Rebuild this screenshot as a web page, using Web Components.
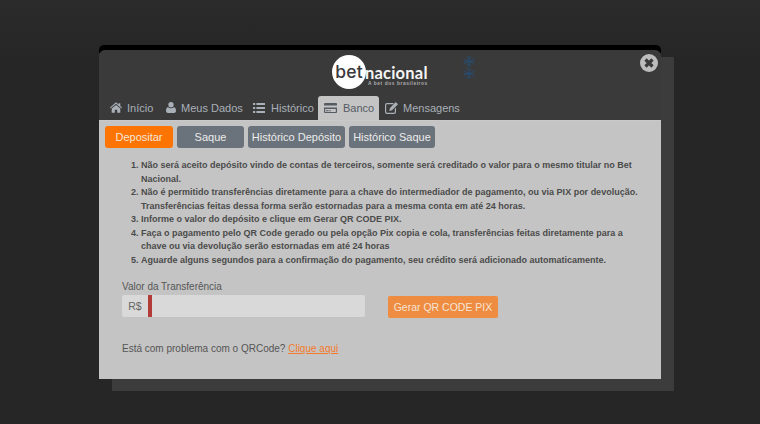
<!DOCTYPE html>
<html lang="pt"><head><meta charset="utf-8"><style>
html,body{margin:0;height:100%;background:#272727;overflow:hidden}
body{font-family:"Liberation Sans",Arial,sans-serif}
</style></head><body>
<bn-stage>
  <bn-modal>
    <bn-logo slot="logo"></bn-logo>
    <bn-tab slot="tabs" icon="home" style="--w:56px;--p:7px;--g:5px">Início</bn-tab>
    <bn-tab slot="tabs" icon="user" style="--w:88px;--p:7px;--g:5px">Meus Dados</bn-tab>
    <bn-tab slot="tabs" icon="list" style="--w:71px;--p:6px;--g:6px">Histórico</bn-tab>
    <bn-tab slot="tabs" icon="card" active style="--w:61px;--p:6px;--g:6px">Banco</bn-tab>
    <bn-tab slot="tabs" icon="edit" style="--w:87px;--p:6px;--g:5px">Mensagens</bn-tab>
    <bn-btn slot="subtabs" kind="primary" style="--w:68px">Depositar</bn-btn>
    <bn-btn slot="subtabs" style="--w:67px">Saque</bn-btn>
    <bn-btn slot="subtabs" style="--w:97px">Histórico Depósito</bn-btn>
    <bn-btn slot="subtabs" style="--w:86px">Histórico Saque</bn-btn>
    <bn-deposit></bn-deposit>
  </bn-modal>
</bn-stage>
<script>
function def(name, html, init){
  customElements.define(name, class extends HTMLElement{
    constructor(){super();this.attachShadow({mode:'open'}).innerHTML=html;}
    connectedCallback(){init&&init(this);}
  });
}
const ICONS={
 home:'<svg viewBox="0 0 14 12" width="12" height="11"><path fill="currentColor" d="M7 0 10 2.600V1h2v3.300L14 6l-.8.9L7 1.700.8 6.900 0 6zM2 7.300 7 3l5 4.300V12H8.400V8.600H5.600V12H2z"/></svg>',
 user:'<svg viewBox="0 0 12 13" width="10" height="11"><circle cx="6" cy="3.200" r="3.200" fill="currentColor"/><path fill="currentColor" d="M2.500 5.800C3.400 7 4.600 7.500 6 7.500s2.600-.5 3.500-1.700C11 6.300 12 8 12 10.500c0 1.600-.9 2.500-2.300 2.500H2.300C.9 13 0 12.100 0 10.500 0 8 1 6.300 2.500 5.800z"/></svg>',
 list:'<svg viewBox="0 0 12 10" width="12" height="10"><path fill="currentColor" d="M0 0h2.200v2H0zM3.400 0H12v2H3.400zM0 4h2.200v2H0zM3.400 4H12v2H3.400zM0 8h2.200v2H0zM3.400 8H12v2H3.400z"/></svg>',
 card:'<svg viewBox="0 0 13 10" width="13" height="10"><path fill="currentColor" fill-rule="evenodd" d="M1 0h11a1 1 0 0 1 1 1v8a1 1 0 0 1-1 1H1a1 1 0 0 1-1-1V1a1 1 0 0 1 1-1zM0 2.500v2h13v-2zM1.200 6v2.900h10.600V6z"/><path fill="currentColor" d="M2 7.200h2.600v1H2zM5.300 7.200h1.500v1H5.300z"/></svg>',
 edit:'<svg viewBox="0 0 13 12" width="13" height="12"><path fill="currentColor" fill-rule="evenodd" d="M2 1h7L7.800 2.200H2a.8.8 0 0 0-.8.800v7c0 .4.400.8.800.8h7c.4 0 .8-.4.8-.8V6.800L11 5.600V10a2 2 0 0 1-2 2H2a2 2 0 0 1-2-2V3a2 2 0 0 1 2-2z"/><path fill="currentColor" d="M10.800 0 13 2.200 7 8.300 4.200 9 5 6.100z"/></svg>'
};
def('bn-stage',`<style>
:host{display:block;position:relative;height:424px;box-sizing:border-box;padding:45px 0 0 99px;background:linear-gradient(#2b2b2b,#262626 60px)}
.shadow{position:absolute;left:112px;top:57px;width:562px;height:334px;background:#3c3c3c}
.wrap{position:relative;width:562px;background:linear-gradient(#000 0,#000 8px,transparent 8px);border-radius:5px 5px 0 0}
</style><div class="shadow"></div><div class="wrap"><slot></slot></div>`);
def('bn-modal',`<style>
:host{display:block;padding-top:5px}
.box{position:relative;background:#3a3a3a;border-radius:6px 6px 0 0;height:329px;display:flex;flex-direction:column}
.head{height:46px;display:flex;justify-content:center}
.tabs{display:flex;height:24px;padding-left:4px;flex:none}
.body{flex:1;background:#c4c4c4;display:flex;flex-direction:column;border-top:1px solid #c9c9c9;box-sizing:border-box}
.sub{display:flex;gap:4px;padding:5px 6px 0}
.close{position:absolute;right:3px;top:4px;width:18px;height:18px}
.flake{position:absolute;left:364px;top:6px}
</style><div class="box">
<div class="head"><slot name="logo"></slot></div>
<svg class="flake" width="12" height="23" viewBox="0 0 12 23"><g stroke="#20558a" stroke-width=".8" fill="none" stroke-dasharray="1.300 .5"><path d="M6 0v11M.5 2.700l11 5.600M11.500 2.700l-11 5.600M1 5.500h10M3.500 .8 6 3 8.500 .8M3.500 10.200 6 8 8.500 10.200"/><path transform="translate(0 12)" d="M6 0v11M.5 2.700l11 5.600M11.500 2.700l-11 5.600M1 5.500h10M3.500 .8 6 3 8.500 .8M3.500 10.200 6 8 8.500 10.200"/></g></svg>
<svg class="close" viewBox="0 0 18 18"><circle cx="9" cy="9" r="9" fill="#bdbdbd"/><path d="M5.500 5.500l7 7M12.500 5.500l-7 7" stroke="#3a3a3a" stroke-width="3.200"/></svg>
<div class="tabs"><slot name="tabs"></slot></div>
<div class="body"><div class="sub"><slot name="subtabs"></slot></div><slot></slot></div>
</div>`);
def('bn-logo',`<style>
:host{display:flex;align-items:flex-start;height:46px;width:98px}
.c{width:34px;height:34px;border-radius:50%;background:#fff;display:flex;align-items:center;justify-content:center;color:#3a3a3a;font:500 17.500px/1 Inter,"Noto Sans",sans-serif;letter-spacing:.2px;flex:none;margin:5px 0 0 1px}
.t{display:flex;flex-direction:column;margin:16px 0 0 -1px}
.n{color:#f4f4f4;font:700 16.500px/14px Lato,"Noto Sans",sans-serif;letter-spacing:.2px}
.s{color:#aeaeae;font:700 4.800px/6px "Liberation Sans",sans-serif;letter-spacing:.6px;margin:1px 0 0 3px;white-space:nowrap}
</style><div class="c">bet</div><div class="t"><div class="n">nacional</div><div class="s">A bet dos brasileiros</div></div>`);
def('bn-tab',`<style>
:host{display:flex;align-items:center;gap:var(--g);padding:0 0 1px var(--p);width:var(--w);height:24px;box-sizing:border-box;color:#a9b0b8;font-size:11px;flex:none;white-space:nowrap}
:host([active]){background:#c4c4c4;color:#545b63;border-radius:3px 3px 0 0}
.i{display:flex}
</style><span class="i"></span><slot></slot>`, el=>{el.shadowRoot.querySelector('.i').innerHTML=ICONS[el.getAttribute('icon')]});
def('bn-btn',`<style>
:host{display:flex;align-items:center;justify-content:center;width:var(--w);height:22px;border-radius:3px;background:#6a727b;color:#ececec;font-size:11px;box-sizing:border-box;flex:none;white-space:nowrap}
:host([kind=primary]){background:#fc7404;color:#f6e6d8}
</style><slot></slot>`);
def('bn-deposit',`<style>
:host{display:block;color:#4a4a4a;font-size:10px}
ol{margin:11px 0 0;padding:0 0 0 42px;width:498px;font-size:9px;font-weight:700;line-height:13.500px;color:#4b4b4b}
.field{margin:14px 0 0 23px}
label{display:block;font-size:10px;line-height:12px;color:#565656}
.row{display:flex;margin-top:2px;align-items:flex-start}
.group{display:flex;width:243px;height:22px;background:#d9d9d9;border-radius:2px;overflow:hidden}
.add{width:26px;display:flex;align-items:center;justify-content:center;color:#666;font-size:10.500px}
.bar{width:4px;background:#b43c38}
.go{margin-left:23px;margin-top:1px;width:110px;height:22px;border-radius:2px;background:#ee8c42;color:#f6e4d4;font-size:10.500px;display:flex;align-items:center;justify-content:center}
.help{margin:24px 0 0 23px;font-size:10px;line-height:13px;color:#555}
a{color:#f57a2c;text-decoration:underline}
</style><ol>
<li>Não será aceito depósito vindo de contas de terceiros, somente será creditado o valor para o mesmo titular no Bet Nacional.</li>
<li>Não é permitido transferências diretamente para a chave do intermediador de pagamento, ou via PIX por devolução. Transferências feitas dessa forma serão estornadas para a mesma conta em até 24 horas.</li>
<li>Informe o valor do depósito e clique em Gerar QR CODE PIX.</li>
<li>Faça o pagamento pelo QR Code gerado ou pela opção Pix copia e cola, transferências feitas diretamente para a chave ou via devolução serão estornadas em até 24 horas</li>
<li>Aguarde alguns segundos para a confirmação do pagamento, seu crédito será adicionado automaticamente.</li>
</ol>
<div class="field"><label>Valor da Transferência</label>
<div class="row"><div class="group"><span class="add">R$</span><span class="bar"></span></div><div class="go">Gerar QR CODE PIX</div></div></div>
<div class="help">Está com problema com o QRCode? <a href="#">Clique aqui</a></div>`);
</script></body></html>
